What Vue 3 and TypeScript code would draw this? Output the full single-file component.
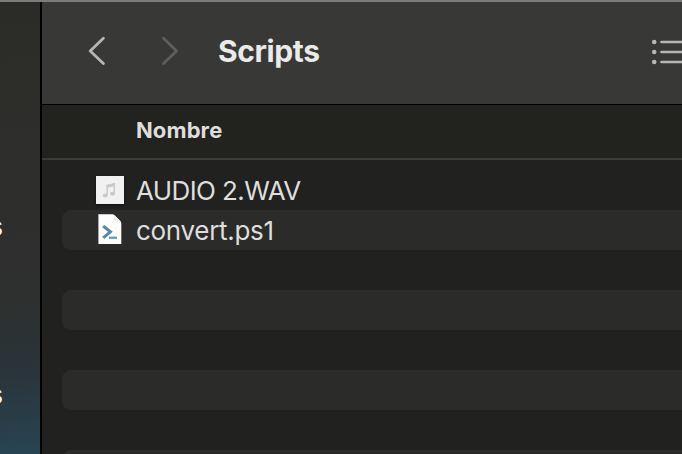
<script setup lang="ts">
type FileKind = 'audio' | 'script'

interface FileRow {
  id: number
  name?: string
  kind?: FileKind
}

const folder = 'Scripts'
const rows: FileRow[] = [
  { id: 1, name: 'AUDIO 2.WAV', kind: 'audio' },
  { id: 2, name: 'convert.ps1', kind: 'script' },
  { id: 3 },
  { id: 4 },
  { id: 5 },
  { id: 6 },
  { id: 7 },
  { id: 8 },
]
</script>

<template>
  <div class="finder">
    <aside class="sidebar">
      <span class="side-item">s</span>
      <span class="side-item">s</span>
    </aside>
    <main class="content">
      <header class="toolbar">
        <svg class="chevron" width="20" height="32" viewBox="0 0 20 32">
          <path d="M16.4 3.3 3.2 16 16.4 28.6" />
        </svg>
        <svg class="chevron forward" width="20" height="32" viewBox="0 0 20 32">
          <path d="M3.5 3.3 16.6 16 3.5 28.6" />
        </svg>
        <h1 class="title">{{ folder }}</h1>
        <svg class="list-icon" width="32" height="32" viewBox="0 0 32 32">
          <g class="dots">
            <circle cx="4.2" cy="6" r="2.3" />
            <circle cx="4.2" cy="16" r="2.3" />
            <circle cx="4.2" cy="26" r="2.3" />
          </g>
          <path d="M11.5 6H34M11.5 16H34M11.5 26H34" />
        </svg>
      </header>
      <div class="columns"><span class="column-name">Nombre</span></div>
      <ul class="rows">
        <li v-for="row in rows" :key="row.id" class="row">
          <span v-if="row.kind" class="icon">
            <svg v-if="row.kind === 'audio'" class="audio-icon" width="28" height="28" viewBox="0 0 28 28">
              <rect width="28" height="28" fill="#f1f1f2" />
              <path d="M11.2 19V9.6L18.3 8v9.4" fill="none" stroke="#c9c9ca" stroke-width="1.5" />
              <path d="M10.5 9 19 7v3l-8.5 2z" fill="#c9c9ca" />
              <ellipse cx="9.3" cy="19.4" rx="2.5" ry="2" fill="#c9c9ca" />
              <ellipse cx="16.5" cy="17.8" rx="2.5" ry="2" fill="#c9c9ca" />
            </svg>
            <svg v-else class="script-icon" width="24" height="32" viewBox="0 0 24 32">
              <defs>
                <linearGradient id="fold" x1="0" y1="1" x2="0.7" y2="0.3">
                  <stop offset="0" stop-color="#cccccc" />
                  <stop offset="1" stop-color="#ffffff" />
                </linearGradient>
              </defs>
              <path d="M.5 1.2H14.2Q15.5 1.3 17 2.8L22 7.8Q23.3 9.3 23.3 11V31H.5z" fill="#fdfdfd" />
              <path d="M.5 1.2V31" stroke="#a9a9a9" stroke-width="1" />
              <path d="M14.4 1.3Q16.4 3 15.6 7.3 20.5 7.4 23.2 10.5 23 8.8 21.8 7.6L17 2.8Q15.8 1.6 14.4 1.3z" fill="url(#fold)" />
              <path d="M5.2 13 12.4 18.8 5.2 24.8" fill="none" stroke="#5389aa" stroke-width="3" />
              <path d="M11 24.7h8" stroke="#5f94b4" stroke-width="2.2" />
            </svg>
          </span>
          <span v-if="row.name" class="name" :class="`name-${row.kind}`">{{ row.name }}</span>
        </li>
      </ul>
    </main>
  </div>
</template>

<style>
body {
  background: #212120;
}
</style>

<style scoped>
.finder {
  display: flex;
  box-sizing: border-box;
  width: 100vw;
  height: 454px;
  overflow: hidden;
  border-top: 2px solid #7b7b79;
  background: #212120;
  color: #dededc;
  font-family: Inter, "Liberation Sans", sans-serif;
}
.sidebar {
  flex: none;
  box-sizing: border-box;
  display: flex;
  flex-direction: column;
  gap: 128px;
  width: 42px;
  padding-top: 205px;
  overflow: hidden;
  border-right: 2px solid #000;
  background: linear-gradient(176deg, #2b2b27 0%, #2d2d2a 18%, #2e2e2d 50%, #2d302f 67%, #2a353a 82%, #284453 100%);
}
.side-item {
  display: flex;
  justify-content: flex-end;
  width: 3px;
  height: 40px;
  line-height: 40px;
  font-size: 26px;
  font-weight: 500;
  color: #f2f2f0;
}
.content {
  flex: 1;
  min-width: 0;
  display: flex;
  flex-direction: column;
}
.toolbar {
  flex: none;
  display: flex;
  align-items: center;
  box-sizing: border-box;
  height: 103px;
  padding: 0 0 4px 45px;
  border-bottom: 1px solid #000;
  background: #383836;
}
.chevron {
  flex: none;
  fill: none;
  stroke: #b6b6b4;
  stroke-width: 2.8;
  stroke-linecap: round;
  stroke-linejoin: round;
}
.forward {
  margin-left: 53px;
  stroke: #5e5e5c;
}
.title {
  margin: 0 0 0 38px;
  line-height: 36px;
  font-size: 30px;
  font-weight: 700;
  letter-spacing: -0.4px;
  color: #eaeae8;
}
.list-icon {
  flex: none;
  margin-left: auto;
  padding-top: 1px;
  fill: none;
  stroke: #b6b6b4;
  stroke-width: 2.6;
  stroke-linecap: round;
}
.dots {
  fill: #b6b6b4;
  stroke: none;
}
.columns {
  flex: none;
  box-sizing: border-box;
  height: 55px;
  padding: 11px 0 0 94px;
  border-bottom: 2px solid #3b3b38;
  background: #22221e;
}
.column-name {
  display: block;
  line-height: 28px;
  font-size: 22px;
  font-weight: 650;
  letter-spacing: 0.1px;
}
.rows {
  margin: 0;
  padding: 10px 0 0 20px;
  list-style: none;
}
.row {
  display: flex;
  align-items: center;
  box-sizing: border-box;
  height: 40px;
  padding-left: 34px;
  border-radius: 9px 0 0 9px;
}
.row:nth-child(even) {
  background: #2b2b2a;
}
.icon {
  display: flex;
  justify-content: center;
  align-items: center;
  width: 28px;
  height: 32px;
}
.icon svg {
  display: block;
}
.audio-icon {
  box-shadow: 0 1px 2px #0008;
}
.script-icon {
  margin-top: -3px;
}
.name {
  margin-left: 12px;
  padding-top: 1px;
  line-height: 32px;
  font-size: 26px;
  font-weight: 440;
  white-space: nowrap;
}
.name-audio {
  letter-spacing: -0.6px;
}
.name-script {
  letter-spacing: -0.3px;
}
</style>
